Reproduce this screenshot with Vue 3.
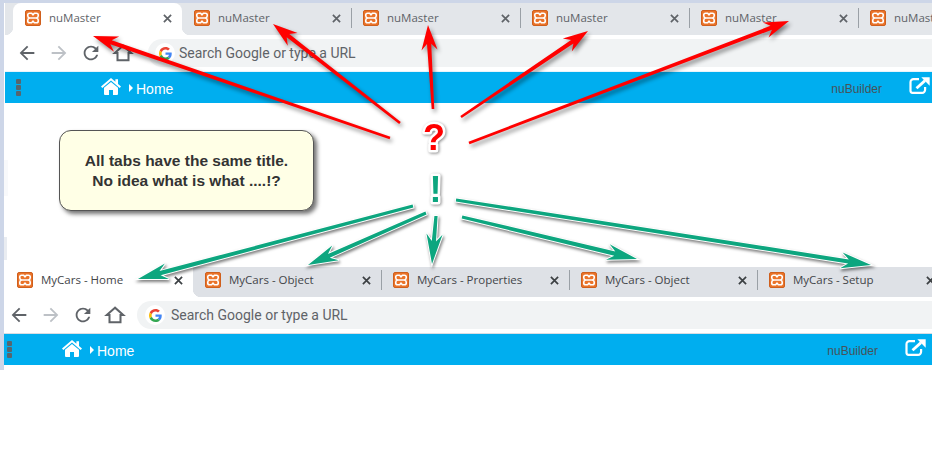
<template>
  <div class="page">
    <div class="rail"></div>
    <div class="stack">
      <section
        v-for="(browser, index) in browsers"
        :key="browser.name"
        class="browser"
        :class="browser.name"
      >
        <div class="tabstrip">
          <div
            v-for="(title, i) in browser.tabs"
            :key="i"
            class="tab"
            :class="{ active: i === 0, sep: i > 0 && i < browser.tabs.length - 1 }"
          >
            <svg class="favicon" viewBox="0 0 16 16">
              <rect x="0.5" y="0.5" width="15" height="15" rx="1.5" fill="#ea7329" stroke="#cf5f1d" />
              <path
                transform="translate(8 8) scale(1.14) translate(-8 -8)"
                d="M5 3.8h1.8L8 5.2l1.2-1.4H11c1 0 1.6.7 1.6 1.6v.6c0 1-.6 1.7-1.6 2 1 .3 1.6 1 1.6 2v.6c0 .9-.6 1.6-1.6 1.6H9.2L8 10.8 6.8 12.2H5c-1 0-1.6-.7-1.6-1.6V10c0-1 .6-1.7 1.6-2-1-.3-1.6-1-1.6-2v-.6c0-.9.6-1.6 1.6-1.6zM5 8h6"
                fill="none"
                stroke="#fff"
                stroke-width="1.4"
              />
            </svg>
            <span class="title">{{ title }}</span>
            <svg class="close" viewBox="0 0 10 10">
              <path d="M1 1l8 8M9 1L1 9" stroke-width="1.9" />
            </svg>
          </div>
        </div>

        <div class="toolbar">
          <div class="nav">
            <svg class="nav-icon" viewBox="0 0 24 24">
              <path d="M20 11H7.83l5.59-5.59L12 4l-8 8 8 8 1.41-1.41L7.83 13H20v-2z" />
            </svg>
            <svg class="nav-icon off" viewBox="0 0 24 24">
              <path d="M4 11h12.17l-5.59-5.59L12 4l8 8-8 8-1.41-1.41L16.17 13H4v-2z" />
            </svg>
            <svg class="nav-icon" viewBox="0 0 24 24">
              <path d="M17.65 6.35C16.2 4.9 14.21 4 12 4c-4.42 0-7.99 3.58-7.99 8s3.57 8 7.99 8c3.73 0 6.84-2.55 7.73-6h-2.08c-.82 2.33-3.04 4-5.65 4-3.31 0-6-2.69-6-6s2.69-6 6-6c1.66 0 3.14.69 4.22 1.78L13 11h7V4l-2.35 2.35z" />
            </svg>
            <svg class="nav-icon" viewBox="0 0 24 24">
              <path class="house" d="M12 4 3 12h3v8h12v-8h3z" />
            </svg>
          </div>
          <div class="omnibox">
            <span class="g-badge">
              <svg viewBox="0 0 48 48">
                <path fill="#EA4335" d="M24 9.5c3.54 0 6.71 1.22 9.21 3.6l6.85-6.85C35.9 2.38 30.47 0 24 0 14.62 0 6.51 5.38 2.56 13.22l7.98 6.19C12.43 13.72 17.74 9.5 24 9.5z" />
                <path fill="#4285F4" d="M46.98 24.55c0-1.57-.15-3.09-.38-4.55H24v9.02h12.94c-.58 2.96-2.26 5.48-4.78 7.18l7.73 6c4.51-4.18 7.09-10.36 7.09-17.65z" />
                <path fill="#FBBC05" d="M10.53 28.59c-.48-1.45-.76-2.99-.76-4.59s.27-3.14.76-4.59l-7.98-6.19C.92 16.46 0 20.12 0 24c0 3.88.92 7.54 2.56 10.78l7.97-6.19z" />
                <path fill="#34A853" d="M24 48c6.48 0 11.93-2.13 15.89-5.81l-7.73-6c-2.15 1.45-4.92 2.3-8.16 2.3-6.26 0-11.57-4.22-13.47-9.91l-7.98 6.19C6.51 42.62 14.62 48 24 48z" />
              </svg>
            </span>
            <span class="omni-text">Search Google or type a URL</span>
          </div>
        </div>

        <div class="appbar">
          <div class="grip"><i></i><i></i><i></i></div>
          <svg class="home-icon" viewBox="0 0 20 17">
            <path d="M10 0 0 8.5l1.3 1.5L10 2.6l8.7 7.4L20 8.5l-3-2.6V1.2h-2.6v2.5z" />
            <path d="M10 4 3 9.8V16a1 1 0 0 0 1 1h4v-5h4v5h4a1 1 0 0 0 1-1V9.8z" />
          </svg>
          <span class="caret"></span>
          <span class="crumb">Home</span>
          <span class="brand">nuBuilder</span>
          <svg class="ext-icon" viewBox="0 0 21 17">
            <path d="M10 2.2H4.5a3 3 0 0 0-3 3v8.6a2 2 0 0 0 2 2h9.6a3 3 0 0 0 3-3V10" fill="none" stroke="#fff" stroke-width="2.2" />
            <path d="M7.5 11.2 16 3.6" fill="none" stroke="#fff" stroke-width="2.8" />
            <path d="M12.3 0.3H20.7V8.7z" fill="#fff" />
          </svg>
        </div>

        <div v-if="index === 0" class="middle">
          <div class="callout">
            All tabs have the same title.<br />
            No idea what is what ....!?
          </div>
        </div>
      </section>
    </div>

    <!-- annotation layer drawn over the screenshots -->
    <svg class="notes" viewBox="0 0 932 467">
      <rect x="6" y="171" width="2" height="2" fill="#444" />
      <rect x="4" y="160" width="4" height="36" fill="#f8f9fb" />
      <rect x="4" y="237" width="3" height="23" fill="#e9ecf1" />
      <g class="red-arrows">
        <path v-for="(d, i) in redArrows" :key="i" :d="d" />
      </g>
      <g class="green-arrows">
        <path v-for="(d, i) in greenArrows" :key="i" :d="d" />
      </g>
      <text class="mark question" x="434" y="150">?</text>
      <text class="mark bang" x="435.5" y="202">!</text>
    </svg>
  </div>
</template>

<script setup>
const browsers = [
  { name: 'upper', tabs: Array(6).fill('nuMaster') },
  {
    name: 'lower',
    tabs: ['MyCars - Home', 'MyCars - Object', 'MyCars - Properties', 'MyCars - Object', 'MyCars - Setup']
  }
]

// tail -> tip, tapered shaft and a notched head
function arrow([x1, y1], [x2, y2], { len, half, neck, tail }) {
  const d = Math.hypot(x2 - x1, y2 - y1)
  const ux = (x2 - x1) / d
  const uy = (y2 - y1) / d
  const at = (back, side) => `${(x2 - ux * back - uy * side).toFixed(1)} ${(y2 - uy * back + ux * side).toFixed(1)}`
  const notch = len * 0.76
  return [
    `M${at(d, tail)}`,
    `L${at(notch, neck)}`,
    `L${at(len, half)}`,
    `L${at(0, 0)}`,
    `L${at(len, -half)}`,
    `L${at(notch, -neck)}`,
    `L${at(d, -tail)}Z`
  ].join(' ')
}

const redArrows = [
  [[390, 138], [93, 36]],
  [[400, 123], [273, 24]],
  [[433, 109], [428, 25]],
  [[461, 117], [588, 31]],
  [[469, 143], [789, 21]]
].map(([a, b]) => arrow(a, b, { len: 25, half: 8, neck: 2.1, tail: 1.3 }))

const greenArrows = [
  [[413, 206], [138, 279]],
  [[426, 213], [308, 265]],
  [[436, 216], [432, 264]],
  [[462, 217], [637, 259]],
  [[456, 200], [871, 265]]
].map(([a, b]) => arrow(a, b, { len: 30, half: 8, neck: 2.1, tail: 1.6 }))
</script>

<style>
html,
body {
  margin: 0;
  overflow: hidden;
  background: #fff;
}
</style>

<style scoped>
.page {
  position: relative;
  display: flex;
  width: 932px;
  height: 467px;
  box-sizing: border-box;
  border-top: 3px solid #cdd6e8;
  overflow: hidden;
  background: #fff;
  font-family: "Liberation Sans", Arial, sans-serif;
}

.rail {
  flex: none;
  width: 4px;
  height: 367px;
  background: #cdd6e8;
}

.stack {
  flex: 1;
  min-width: 0;
}

.upper {
  margin-left: 1px;
}

/* Tabs */
.tabstrip {
  display: flex;
  overflow: hidden;
}

.upper .tabstrip {
  height: 32px;
  padding-left: 8px;
  background: #e3e6ea;
}

.lower .tabstrip {
  height: 30px;
  background: #dee1e6;
}

.tab {
  position: relative;
  flex: none;
  display: flex;
  align-items: center;
  box-sizing: border-box;
  width: 169px;
  padding-left: 12px;
  padding-bottom: 2px;
}

.lower .tab {
  width: 188px;
  padding-bottom: 4px;
}

.tab.active {
  background: #fff;
  border-radius: 8px 8px 0 0;
}

.lower .tab.active {
  width: 189px;
  padding-left: 13px;
  border-radius: 0;
}

.tab.active::before,
.tab.active::after {
  content: "";
  position: absolute;
  bottom: 0;
  width: 8px;
  height: 8px;
}

.tab.active::before {
  left: -8px;
  background: radial-gradient(circle at 0 0, transparent 8px, #fff 8.5px);
}

.tab.active::after {
  right: -8px;
  background: radial-gradient(circle at 100% 0, transparent 8px, #fff 8.5px);
}

.lower .tab.active::before {
  display: none;
}

.tab.sep::after {
  content: "";
  position: absolute;
  right: -1px;
  top: 5px;
  height: 20px;
  border-right: 1px solid #9aa0a6;
}

.lower .tab.sep::after {
  top: 3px;
}

.favicon {
  flex: none;
  width: 16px;
  height: 16px;
  margin-right: 8px;
}

.title {
  flex: 1;
  margin-bottom: 2px;
  white-space: nowrap;
  font-family: "Open Sans", sans-serif;
  font-size: 11.5px;
  color: #5f6368;
}

.lower .title {
  color: #434549;
}

.close {
  flex: none;
  width: 9px;
  height: 9px;
  margin-right: 10px;
  fill: none;
  stroke: #5f6368;
}

.lower .close {
  stroke: #3c4043;
}

/* Toolbar */
.toolbar {
  display: flex;
  align-items: center;
  height: 36px;
  background: #fff;
}

.upper .toolbar {
  padding-left: 6px;
}

.nav {
  flex: none;
  display: flex;
}

.lower .nav {
  margin-left: -1px;
}

.nav-icon {
  width: 32px;
  height: 22px;
  fill: #5f6368;
}

.nav-icon.off {
  fill: #bdc1c6;
}

.nav-icon .house {
  fill: none;
  stroke: #5f6368;
  stroke-width: 2.2;
  stroke-linejoin: miter;
}

.omnibox {
  flex: 1;
  display: flex;
  align-items: center;
  height: 28px;
  margin-left: 9px;
  padding-left: 7px;
  border-radius: 14px 0 0 14px;
  background: #f1f3f4;
}

.lower .omnibox {
  margin-left: 6px;
  padding-left: 8px;
}

.g-badge {
  flex: none;
  display: flex;
  align-items: center;
  justify-content: center;
  width: 20px;
  height: 20px;
  margin-right: 4px;
  border-radius: 50%;
  background: #fff;
}

.lower .g-badge {
  margin-right: 6px;
}

.g-badge svg {
  width: 13px;
  height: 13px;
}

.omni-text {
  font-family: Roboto, sans-serif;
  font-size: 14px;
  color: #5f6368;
}

/* App bar */
.appbar {
  display: flex;
  align-items: center;
  height: 31px;
  border-top: 1px solid #d8dde3;
  background: #00aeef;
}

.upper .appbar {
  border-top-color: #e7f4fb;
}

.grip {
  flex: none;
  display: flex;
  flex-direction: column;
  gap: 1px;
}

.grip i {
  width: 5px;
  height: 5px;
  border-radius: 1px;
  background: #56666f;
}

.upper .grip {
  margin-left: 11px;
  margin-right: 80px;
}

.lower .grip {
  margin-left: 3px;
  margin-right: 50px;
}

.home-icon {
  flex: none;
  width: 20px;
  height: 17px;
  margin-bottom: 2px;
  fill: #fff;
}

.caret {
  flex: none;
  width: 0;
  height: 0;
  margin: 1px 3px 0 8px;
  border-left: 4px solid #fff;
  border-top: 4px solid transparent;
  border-bottom: 4px solid transparent;
}

.crumb {
  margin-top: 2px;
  font-size: 14px;
  color: #fff;
}

.brand {
  margin-top: 2px;
  margin-left: auto;
  font-size: 12px;
  color: #465359;
}

.ext-icon {
  flex: none;
  width: 21px;
  height: 17px;
  margin-left: 27px;
  margin-right: 2px;
  margin-bottom: 5px;
}

.lower .ext-icon {
  margin-right: 6px;
}

/* Middle with the callout */
.middle {
  box-sizing: border-box;
  height: 164px;
  padding: 27px 0 0 54px;
}

.callout {
  box-sizing: border-box;
  width: 255px;
  height: 81px;
  padding-top: 20px;
  border: 1px solid #555;
  border-radius: 12px;
  background: #ffffe6;
  box-shadow: 3px 3px 4px rgba(0, 0, 0, 0.55);
  font-size: 15.5px;
  font-weight: 700;
  line-height: 20px;
  text-align: center;
  color: #333;
}

/* Annotations */
.notes {
  position: absolute;
  left: 0;
  top: -3px;
  width: 932px;
  height: 467px;
  pointer-events: none;
}

.red-arrows path {
  fill: #f00;
  filter: drop-shadow(2px 3px 2px rgba(0, 0, 0, 0.45));
}

.green-arrows path {
  fill: #0da67f;
  stroke: #fff;
  stroke-width: 2;
  paint-order: stroke;
  filter: drop-shadow(1px 2px 1.5px rgba(0, 0, 0, 0.5));
}

.mark {
  font-family: "Liberation Sans", Arial, sans-serif;
  font-size: 36px;
  font-weight: 700;
  text-anchor: middle;
  stroke: #fff;
  stroke-width: 5px;
  stroke-linejoin: round;
  paint-order: stroke;
  filter: drop-shadow(1px 1px 1.5px rgba(0, 0, 0, 0.45));
}

.question {
  fill: #f00;
}

.bang {
  fill: #0da67f;
}
</style>
